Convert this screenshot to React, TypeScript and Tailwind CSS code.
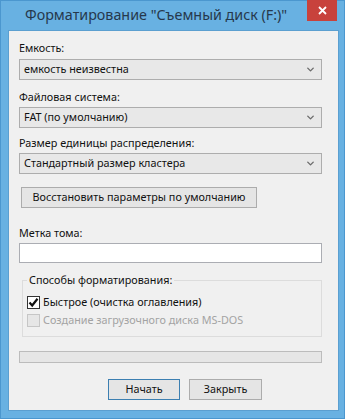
import { ChevronDown } from 'lucide-react';

const font = { fontFamily: '"Noto Sans", "Open Sans", Arial, sans-serif' };

function Select({ value }: { value: string }) {
  return (
    <div className="flex h-[21px] items-center justify-between border border-[#adadad] bg-[#e8e8e8] pl-[4px] pr-[5px] text-[10.8px] text-[#111]">
      <span className="leading-none">{value}</span>
      <ChevronDown size={11} strokeWidth={3} className="text-[#6b6b6b]" />
    </div>
  );
}

function Checkbox({ checked, disabled, label }: { checked?: boolean; disabled?: boolean; label: string }) {
  return (
    <div className="flex h-[13px] items-center gap-[3px]">
      <span
        className={
          disabled
            ? 'flex h-[13px] w-[13px] items-center justify-center border border-[#c6c6c6] bg-[#e6e6e6]'
            : 'flex h-[13px] w-[13px] items-center justify-center border border-[#333] bg-white'
        }
      >
        {checked && (
          <svg width="11" height="11" viewBox="0 0 11 11">
            <path d="M1.5 5.5 L4.2 8.5 L9.5 1.8" fill="none" stroke="#111" strokeWidth="2.2" />
          </svg>
        )}
      </span>
      <span className={disabled ? 'whitespace-nowrap leading-none text-[#a3a3a3]' : 'whitespace-nowrap leading-none text-[#111]'}>
        {label}
      </span>
    </div>
  );
}

export default function App() {
  return (
    <div className="h-[419px] w-[345px] bg-white" style={font}>
      <div className="flex h-full w-full flex-col border border-[#4b97cf] bg-[#68b1e2]">
        {/* title bar */}
        <div className="relative flex h-[29px] shrink-0 items-center">
          <span className="ml-[24px] whitespace-nowrap text-[14.3px] leading-none text-[#26384c]">
            Форматирование "Съемный диск (F:)"
          </span>
          <div className="absolute right-[7px] top-[-1px] flex h-[21px] w-[30px] items-center justify-center bg-[#c8423c]">
            <svg width="9" height="9" viewBox="0 0 9 9">
              <path d="M1 1 L8 8 M8 1 L1 8" stroke="#fff" strokeWidth="1.8" />
            </svg>
          </div>
        </div>

        {/* content */}
        <div className="ml-[7px] mr-[5px] flex h-[381px] flex-col border border-[#5b9fd0] bg-[#f0f0f0] pl-[10px] pr-[16px] text-[10.8px] text-[#111]">
          <div className="mt-[9px] h-[16px] leading-[16px]">Емкость:</div>
          <div className="mt-[3px]">
            <Select value="емкость неизвестна" />
          </div>

          <div className="mt-[9px] h-[16px] leading-[16px]">Файловая система:</div>
          <div className="mt-[2px]">
            <Select value="FAT (по умолчанию)" />
          </div>

          <div className="mt-[7px] h-[16px] leading-[16px]">Размер единицы распределения:</div>
          <div className="mt-[2px]">
            <Select value="Стандартный размер кластера" />
          </div>

          <div className="ml-[2px] mt-[13px] flex h-[21px] w-[236px] items-center justify-center whitespace-nowrap border border-[#acacac] bg-[#e5e5e5] leading-none">
            Восстановить параметры по умолчанию
          </div>

          <div className="mt-[17px] h-[16px] leading-[16px]">Метка тома:</div>
          <div className="mt-[2px] h-[20px] border border-[#abadb3] bg-white" />

          {/* group box */}
          <div className="relative ml-[3px] mt-[17px] flex h-[57px] flex-col gap-[5px] border border-[#dcdcdc] pl-[4px] pt-[15px]">
            <span className="absolute left-[4px] top-[-9px] bg-[#f0f0f0] px-[2px] leading-[16px]">
              Способы форматирования:
            </span>
            <Checkbox checked label="Быстрое (очистка оглавления)" />
            <Checkbox disabled label="Создание загрузочного диска MS-DOS" />
          </div>

          <div className="mt-[14px] h-[12px] border border-[#bcbcbc] bg-[#e6e6e6]" />

          <div className="ml-[89px] mt-[16px] flex gap-[9px]">
            <div className="flex h-[21px] w-[72px] items-center justify-center border border-[#3c7fb1] bg-[#e5e5e5] leading-none">
              Начать
            </div>
            <div className="flex h-[21px] w-[73px] items-center justify-center border border-[#acacac] bg-[#e5e5e5] leading-none">
              Закрыть
            </div>
          </div>
        </div>
      </div>
    </div>
  );
}
